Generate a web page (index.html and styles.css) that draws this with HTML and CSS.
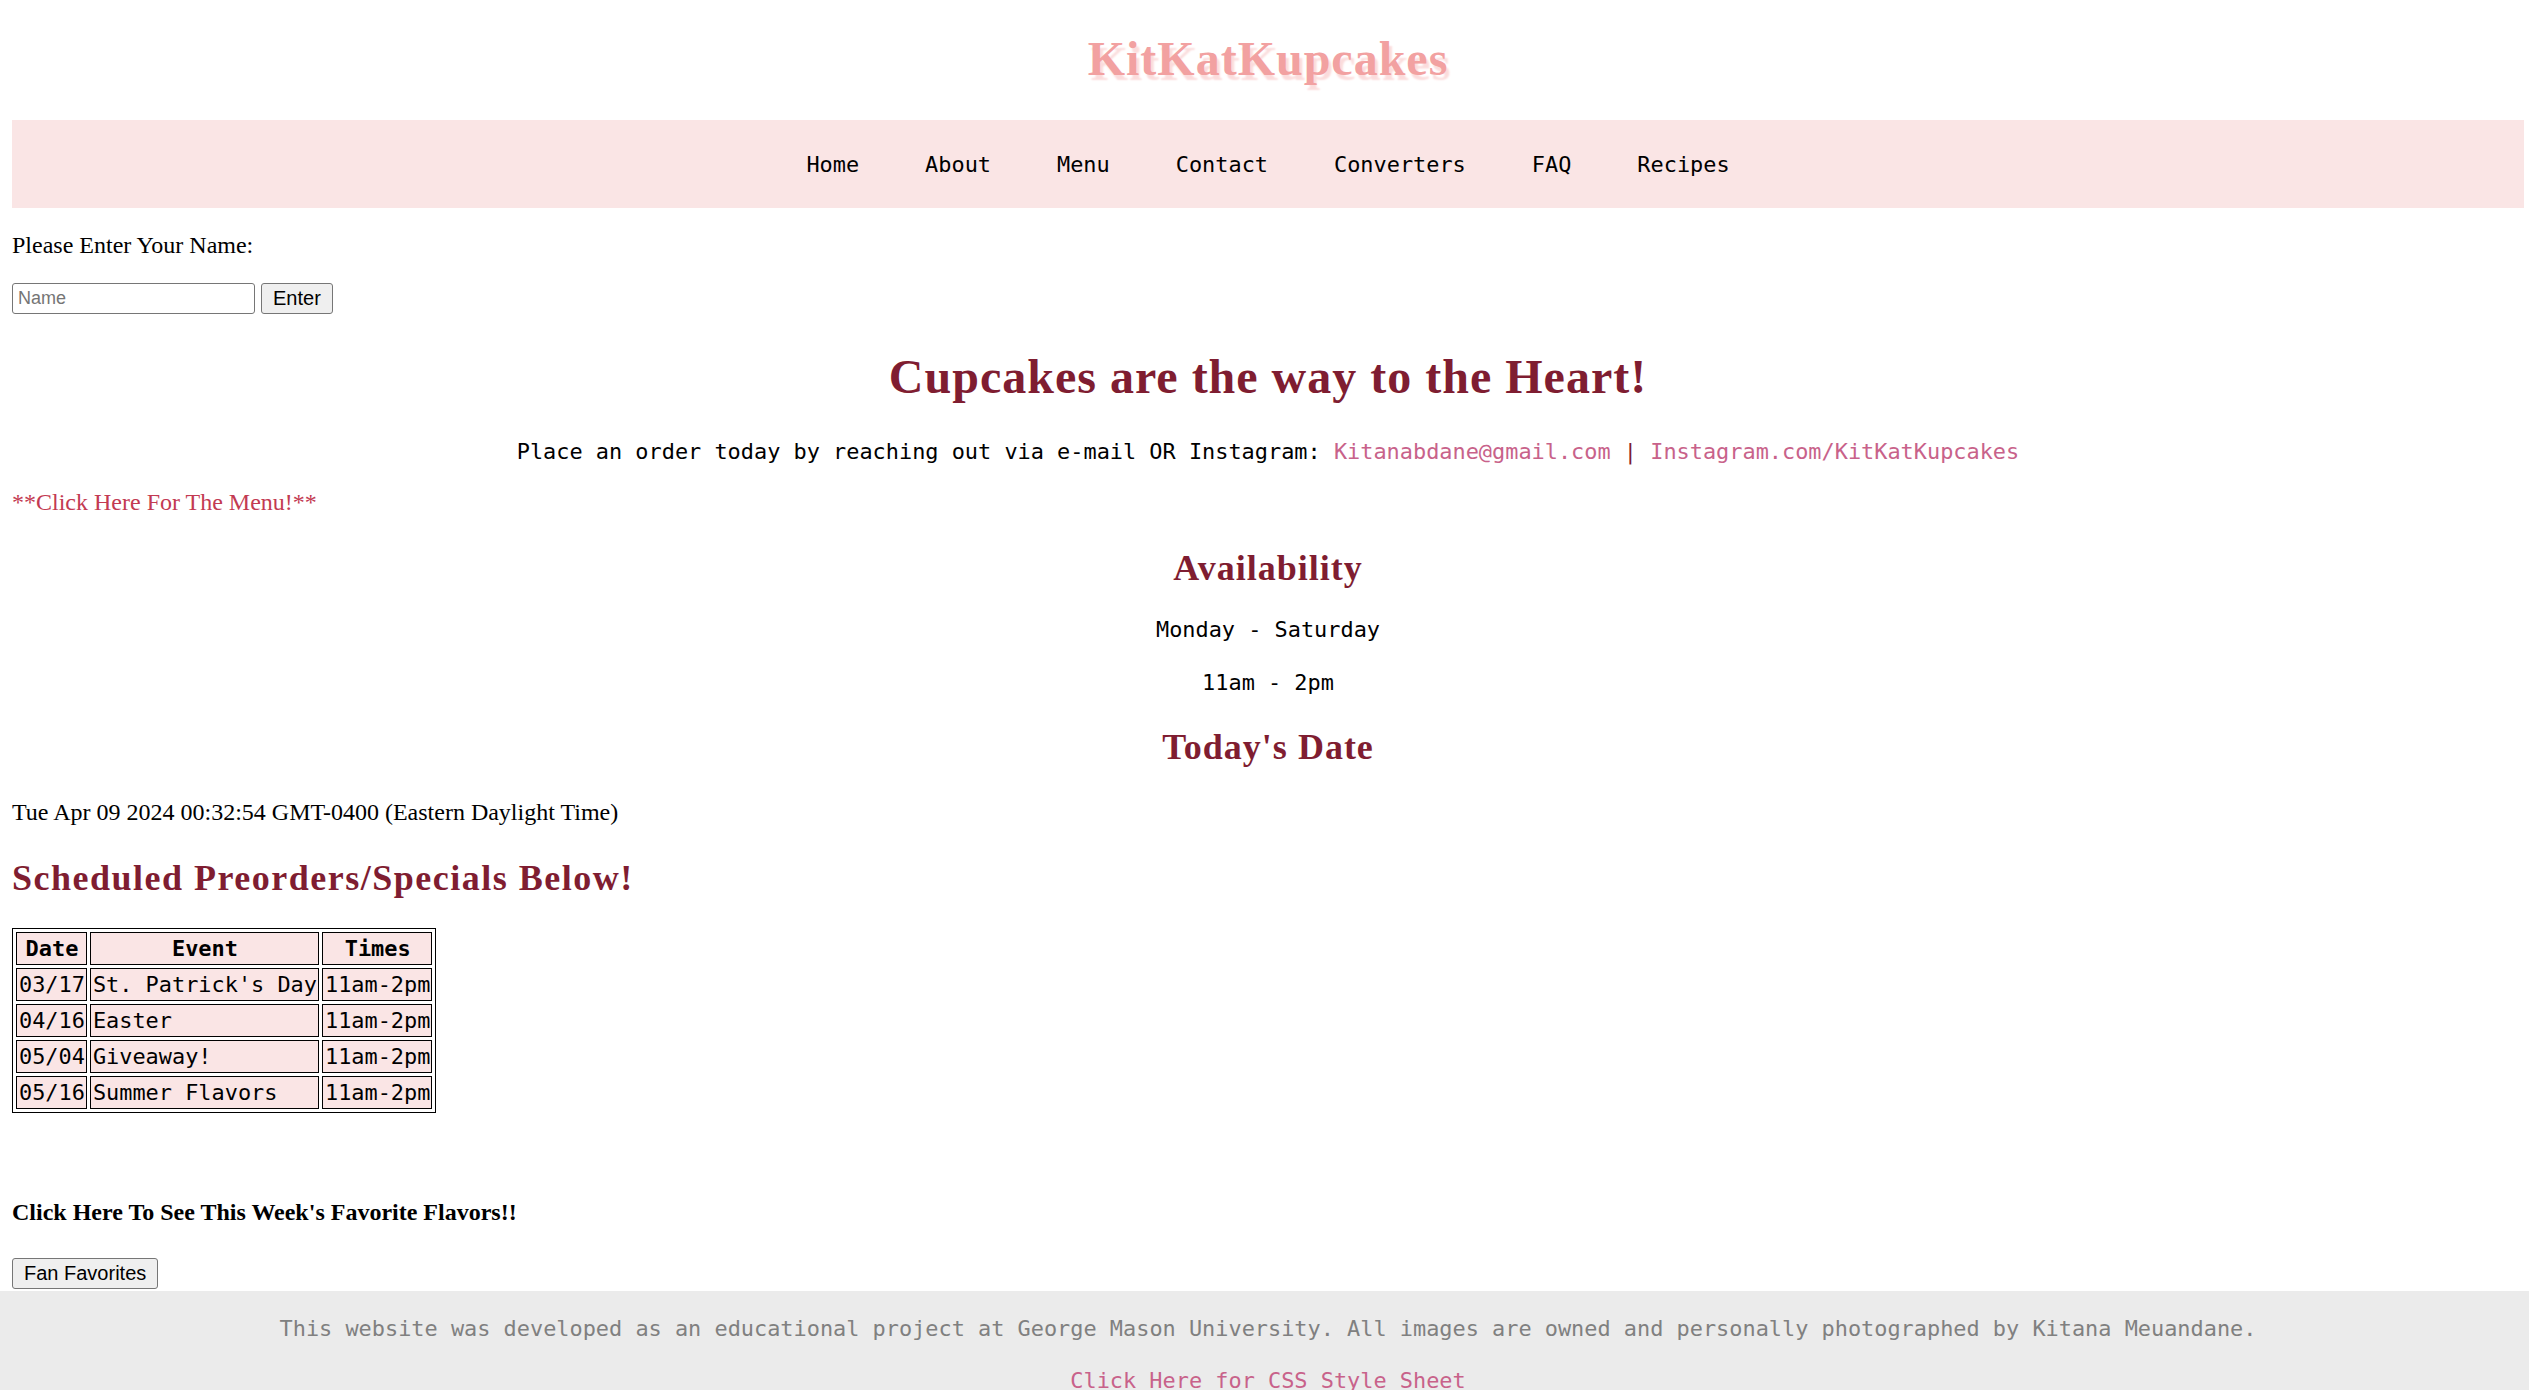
FILE: index.html
```html
<!DOCTYPE html>
<html lang="en">
<head>
<meta charset="utf-8">
<title>KitKatKupcakes</title>
<link rel="stylesheet" href="styles.css">
</head>
<body>
<div class="page">
  <header class="masthead">
    <h1 class="site-title">KitKatKupcakes</h1>
  </header>
  <nav class="nav">
    <a href="#">Home</a>
    <a href="#">About</a>
    <a href="#">Menu</a>
    <a href="#">Contact</a>
    <a href="#">Converters</a>
    <a href="#">FAQ</a>
    <a href="#">Recipes</a>
  </nav>
  <main>
    <p class="name-label">Please Enter Your Name:</p>
    <form class="name-form">
      <input class="name-input" type="text" placeholder="Name">
      <button class="btn" type="button">Enter</button>
    </form>
    <h1 class="hero">Cupcakes are the way to the Heart!</h1>
    <p class="order">Place an order today by reaching out via e-mail OR Instagram: <a href="#">Kitanabdane@gmail.com</a> <span class="sep">|</span> <a href="#">Instagram.com/KitKatKupcakes</a></p>
    <p class="menu-link"><a href="#">**Click Here For The Menu!**</a></p>
    <h2 class="section-title center first">Availability</h2>
    <p class="avail-line days">Monday - Saturday</p>
    <p class="avail-line hours">11am - 2pm</p>
    <h2 class="section-title center">Today's Date</h2>
    <p class="date-text">Tue Apr 09 2024 00:32:54 GMT-0400 (Eastern Daylight Time)</p>
    <h2 class="section-title wide">Scheduled Preorders/Specials Below!</h2>
    <table class="specials">
      <thead>
        <tr><th>Date</th><th>Event</th><th>Times</th></tr>
      </thead>
      <tbody>
        <tr><td>03/17</td><td>St. Patrick's Day</td><td>11am-2pm</td></tr>
        <tr><td>04/16</td><td>Easter</td><td>11am-2pm</td></tr>
        <tr><td>05/04</td><td>Giveaway!</td><td>11am-2pm</td></tr>
        <tr><td>05/16</td><td>Summer Flavors</td><td>11am-2pm</td></tr>
      </tbody>
    </table>
    <p class="favorites">Click Here To See This Week's Favorite Flavors!!</p>
    <button class="btn fan-btn" type="button">Fan Favorites</button>
  </main>
</div>
<footer class="footer">
  <p class="footer-text">This website was developed as an educational project at George Mason University. All images are owned and personally photographed by Kitana Meuandane.</p>
  <p class="footer-link"><a href="#">Click Here for CSS Style Sheet</a></p>
</footer>
</body>
</html>
```

FILE: styles.css
```css
html, body {
  background: #ffffff;
}

body {
  margin: 0;
  font-family: "Liberation Serif", "Times New Roman", serif;
  font-size: 24px;
  color: #000000;
}

.page {
  padding: 0 5px 0 12px;
}

.masthead {
  padding-top: 31px;
  margin-bottom: 33px;
}

.site-title {
  margin: 0;
  font: bold 48px/56px "Liberation Serif", serif;
  letter-spacing: 1px;
  text-align: center;
  color: #f2a1a1;
  text-shadow: 3px 5px 2px #fbdcdc;
}

.nav {
  height: 88px;
  background: #fae5e5;
  display: flex;
  justify-content: center;
  align-items: center;
  gap: 66px;
  padding-top: 1px;
  box-sizing: border-box;
  font: 21.9px/26px "DejaVu Sans Mono", monospace;
}

.nav a {
  color: #000000;
  text-decoration: none;
}

.name-label {
  margin: 23px 0 0;
  line-height: 28px;
}

.name-form {
  margin: 24px 0 0;
  display: flex;
  gap: 6px;
  height: 31px;
}

.name-input {
  box-sizing: border-box;
  width: 243px;
  height: 31px;
  margin: 0;
  padding: 0 5px;
  border: 1px solid #767676;
  border-radius: 3px;
  font: 18px "Liberation Sans", Arial, sans-serif;
  color: #000;
}

.name-input::placeholder {
  color: #757575;
}

.btn {
  box-sizing: border-box;
  height: 31px;
  margin: 0;
  padding: 0 11px;
  border: 1px solid #767676;
  border-radius: 3px;
  background: #efefef;
  font: 20px "Liberation Sans", Arial, sans-serif;
  color: #000000;
}

.hero {
  margin: 35px 0 0;
  font: bold 48px/56px "Liberation Serif", serif;
  letter-spacing: 1px;
  text-align: center;
  color: #7f1d31;
}

.order {
  margin: 34px 0 0;
  font: 21.9px/26px "DejaVu Sans Mono", monospace;
  text-align: center;
}

.order a {
  color: #c8628a;
  text-decoration: none;
}

.sep {
  color: #7f1d31;
}

.menu-link {
  margin: 23px 0 0;
  line-height: 28px;
}

.menu-link a {
  color: #c33a52;
  text-decoration: none;
}

.section-title {
  margin: 30px 0 0;
  font: bold 36px/42px "Liberation Serif", serif;
  letter-spacing: 1px;
  color: #7f1d31;
}

.section-title.first {
  margin-top: 31px;
}

.section-title.wide {
  margin-top: 31px;
  letter-spacing: 1.5px;
}

.center {
  text-align: center;
}

.avail-line {
  margin: 27px 0 0;
  font: 21.9px/26px "DejaVu Sans Mono", monospace;
  text-align: center;
}

.avail-line.days {
  margin-top: 28px;
}

.date-text {
  margin: 30px 0 0;
  line-height: 28px;
}

.specials {
  margin-top: 29px;
  border: 1px solid #000000;
  border-spacing: 3px;
  font: 21.9px "DejaVu Sans Mono", monospace;
}

.specials th,
.specials td {
  border: 1px solid #000000;
  background: #fae5e5;
  padding: 3px 1px 3px 2px;
  line-height: 25px;
}

.specials th {
  font-weight: bold;
  text-align: center;
}

.specials td {
  text-align: left;
}

.favorites {
  margin: 85px 0 0;
  font-weight: bold;
  line-height: 28px;
}

.fan-btn {
  display: block;
  margin-top: 32px;
}

.footer {
  margin-top: 2px;
  padding: 25px 5px 30px 12px;
  background: #ebebeb;
  text-align: center;
  font: 21.9px/26px "DejaVu Sans Mono", monospace;
  color: #808080;
}

.footer-text {
  margin: 0;
}

.footer-link {
  margin: 26px 0 0;
}

.footer-link a {
  color: #c8628a;
  text-decoration: none;
}
```
